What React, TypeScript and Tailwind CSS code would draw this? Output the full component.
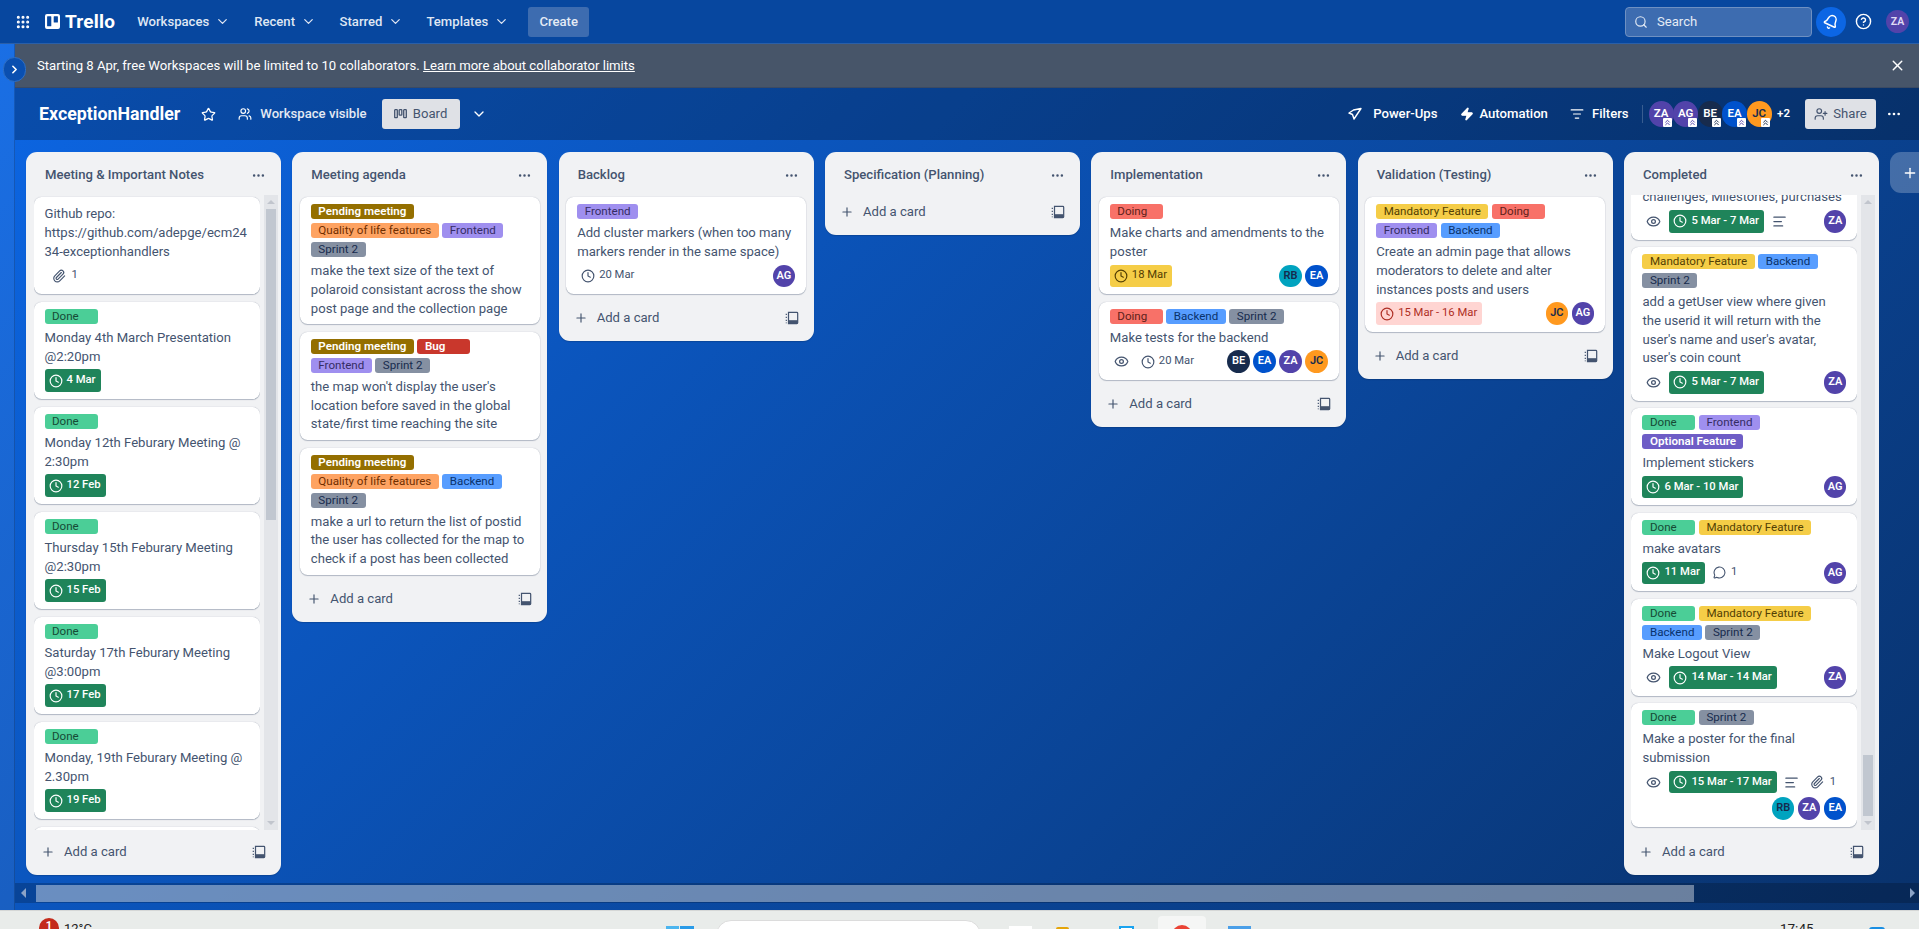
import {
  AlignLeft,
  Bell,
  ChevronDown,
  ChevronRight,
  ChevronsUp,
  CircleHelp,
  Clock,
  Ellipsis,
  Eye,
  Grip,
  ListFilter,
  MessageCircle,
  Paperclip,
  Plus,
  Search,
  Star,
  UserPlus,
  Users,
  X,
  Zap,
} from "lucide-react";

type LabelKey = keyof typeof LABELS;
type DateKind = "done" | "soon" | "late" | "plain";
type Card = {
  labels?: LabelKey[];
  title: string;
  watch?: boolean;
  date?: string;
  dateKind?: DateKind;
  desc?: boolean;
  attach?: number;
  comment?: number;
  members?: string[];
  className?: string;
};
type List = { name: string; cards: Card[]; scroll?: "top" | "bottom" };

const LABELS = {
  done: { text: "Done", cls: "bg-[#4bce97] text-[#164b35]" },
  pending: { text: "Pending meeting", cls: "bg-[#946f00] text-white font-semibold" },
  quality: { text: "Quality of life features", cls: "bg-[#fea362] text-[#702e00]" },
  frontend: { text: "Frontend", cls: "bg-[#9f8fef] text-[#352c63]" },
  sprint: { text: "Sprint 2", cls: "bg-[#8590a2] text-[#172b4d]" },
  bug: { text: "Bug", cls: "bg-[#c9372c] text-white font-semibold" },
  backend: { text: "Backend", cls: "bg-[#579dff] text-[#09326c]" },
  doing: { text: "Doing", cls: "bg-[#f87168] text-[#5d1f1a]" },
  mandatory: { text: "Mandatory Feature", cls: "bg-[#f5cd47] text-[#533f04]" },
  optional: { text: "Optional Feature", cls: "bg-[#6e5dc6] text-white font-semibold" },
};

const DATE_COLOR: Record<DateKind, string> = {
  done: "bg-[#1f845a] text-white",
  soon: "bg-[#f5cd47] text-[#533f04]",
  late: "bg-[#ffd5d2] text-[#ae2e24]",
  plain: "text-[#44546f]",
};

const MEMBER_COLOR: Record<string, string> = {
  ZA: "bg-[#5243aa] text-white",
  AG: "bg-[#5243aa] text-white",
  BE: "bg-[#172b4d] text-white",
  EA: "bg-[#0052cc] text-white",
  JC: "bg-[#ff991f] text-[#172b4d]",
  RB: "bg-[#00a3bf] text-[#172b4d]",
};

const meeting = (title: string, date: string): Card => ({ labels: ["done"], title, date, dateKind: "done" });

const LISTS: List[] = [
  {
    name: "Meeting & Important Notes",
    scroll: "top",
    cards: [
      { title: "Github repo: https://github.com/adepge/ecm2434-exceptionhandlers", attach: 1 },
      meeting("Monday 4th March Presentation @2:20pm", "4 Mar"),
      meeting("Monday 12th Feburary Meeting @ 2:30pm", "12 Feb"),
      meeting("Thursday 15th Feburary Meeting @2:30pm", "15 Feb"),
      meeting("Saturday 17th Feburary Meeting @3:00pm", "17 Feb"),
      meeting("Monday, 19th Feburary Meeting @ 2.30pm", "19 Feb"),
      // only the top edge of this one shows above the footer
      { title: "" },
    ],
  },
  {
    name: "Meeting agenda",
    cards: [
      {
        labels: ["pending", "quality", "frontend", "sprint"],
        title: "make the text size of the text of polaroid consistant across the show post page and the collection page",
      },
      {
        labels: ["pending", "bug", "frontend", "sprint"],
        title: "the map won't display the user's location before saved in the global state/first time reaching the site",
      },
      {
        labels: ["pending", "quality", "backend", "sprint"],
        title: "make a url to return the list of postid the user has collected for the map to check if a post has been collected",
      },
    ],
  },
  {
    name: "Backlog",
    cards: [
      {
        labels: ["frontend"],
        title: "Add cluster markers (when too many markers render in the same space)",
        date: "20 Mar",
        dateKind: "plain",
        members: ["AG"],
      },
    ],
  },
  { name: "Specification (Planning)", cards: [] },
  {
    name: "Implementation",
    cards: [
      {
        labels: ["doing"],
        title: "Make charts and amendments to the poster",
        date: "18 Mar",
        dateKind: "soon",
        members: ["RB", "EA"],
      },
      {
        labels: ["doing", "backend", "sprint"],
        title: "Make tests for the backend",
        watch: true,
        date: "20 Mar",
        dateKind: "plain",
        members: ["BE", "EA", "ZA", "JC"],
      },
    ],
  },
  {
    name: "Validation (Testing)",
    cards: [
      {
        labels: ["mandatory", "doing", "frontend", "backend"],
        title: "Create an admin page that allows moderators to delete and alter instances posts and users",
        date: "15 Mar - 16 Mar",
        dateKind: "late",
        members: ["JC", "AG"],
      },
    ],
  },
  {
    name: "Completed",
    scroll: "bottom",
    cards: [
      {
        title: "challenges, Milestones, purchases",
        watch: true,
        date: "5 Mar - 7 Mar",
        dateKind: "done",
        desc: true,
        members: ["ZA"],
        className: "-mt-[16.75px]",
      },
      {
        labels: ["mandatory", "backend", "sprint"],
        title: "add a getUser view where given the userid it will return with the user's name and user's avatar, user's coin count",
        watch: true,
        date: "5 Mar - 7 Mar",
        dateKind: "done",
        members: ["ZA"],
      },
      {
        labels: ["done", "frontend", "optional"],
        title: "Implement stickers",
        date: "6 Mar - 10 Mar",
        dateKind: "done",
        members: ["AG"],
      },
      {
        labels: ["done", "mandatory"],
        title: "make avatars",
        date: "11 Mar",
        dateKind: "done",
        comment: 1,
        members: ["AG"],
      },
      {
        labels: ["done", "mandatory", "backend", "sprint"],
        title: "Make Logout View",
        watch: true,
        date: "14 Mar - 14 Mar",
        dateKind: "done",
        members: ["ZA"],
      },
      {
        labels: ["done", "sprint"],
        title: "Make a poster for the final submission",
        watch: true,
        date: "15 Mar - 17 Mar",
        dateKind: "done",
        desc: true,
        attach: 1,
        members: ["RB", "ZA", "EA"],
      },
    ],
  },
];

function TemplateIcon() {
  return (
    <svg width="14" height="14" viewBox="0 0 16 16" fill="none" stroke="currentColor" strokeWidth="1.4">
      <path d="M4 1.500h9.500a1 1 0 0 1 1 1v11a1 1 0 0 1-1 1H4z" />
      <path d="M1.500 3v1.500M1.500 6.500v1.500M1.500 10v1.500M1.500 13v1" />
      <path d="M4.500 10.500h10v3.700h-10z" fill="currentColor" stroke="none" />
    </svg>
  );
}

function TrelloLogo() {
  return (
    <div className="flex items-center gap-[5px] text-white">
      <svg width="15" height="15" viewBox="0 0 15 15">
        <path
          fillRule="evenodd"
          fill="currentColor"
          d="M2 0h11a2 2 0 0 1 2 2v11a2 2 0 0 1-2 2H2a2 2 0 0 1-2-2V2a2 2 0 0 1 2-2zm.6 2.200a.5.5 0 0 0-.5.5v9a.5.5 0 0 0 .5.5h3.200a.5.5 0 0 0 .5-.5v-9a.5.5 0 0 0-.5-.5zm6.600 0a.5.5 0 0 0-.5.5v5.200a.5.5 0 0 0 .5.5h3.200a.5.5 0 0 0 .5-.5V2.700a.5.5 0 0 0-.5-.5z"
        />
      </svg>
      <span className="text-[19px] font-bold leading-none tracking-[0.2px]">Trello</span>
    </div>
  );
}

function NavMenu({ label, className }: { label: string; className: string }) {
  return (
    <div className={`flex items-center text-[13.125px] font-medium text-[#dfe6f3] ${className}`}>
      {label}
      <ChevronDown size={15} strokeWidth={2} className="ml-[6px]" />
    </div>
  );
}

function Avatar({ who, size = "card" }: { who: string; size?: "card" | "nav" }) {
  return (
    <span
      className={`flex shrink-0 items-center justify-center rounded-full font-semibold ${MEMBER_COLOR[who]} ${
        size === "card" ? "h-[22.5px] w-[22.500px] text-[11px]" : "h-[26px] w-[25px] text-[11.5px]"
      }`}
    >
      {who}
    </span>
  );
}

function BoardMember({ who, dark }: { who: string; dark?: boolean }) {
  return (
    <div className="relative -mr-px w-[25.5px] shrink-0">
      <Avatar who={who} size="nav" />
      <span
        className={`absolute right-[2px] bottom-0 flex h-[9px] w-[9px] items-center justify-center rounded-[1px] bg-white ${
          dark ? "text-[#172b4d]" : "text-[#5243aa]"
        }`}
      >
        <ChevronsUp size={9} strokeWidth={2.5} />
      </span>
    </div>
  );
}

function CardView({ card }: { card: Card }) {
  const hasMeta = card.watch || card.date || card.attach || card.comment || card.members;
  return (
    <div
      className={`shrink-0 rounded-[7.5px] bg-white px-[11px] pt-[7px] pb-[7px] shadow-[0_1px_1px_#091e4240,0_0_1px_#091e424f] ${card.className ?? ""}`}
    >
      {card.labels && (
        <div className="mb-[4px] flex flex-wrap gap-x-[3.5px] gap-y-[4px]">
          {card.labels.map((l) => (
            <span
              key={l}
              className={`inline-block h-[15px] min-w-[53px] rounded-[3px] px-[7.5px] text-[11.6px] leading-[15px] ${LABELS[l].cls}`}
            >
              {LABELS[l].text}
            </span>
          ))}
        </div>
      )}
      <p className="min-h-[18.75px] translate-y-[1px] text-[13.125px] leading-[18.75px] text-[#44546f] [overflow-wrap:anywhere]">
        {card.title}
      </p>
      {hasMeta && (
        <div className="mt-[4px] flex flex-wrap items-center gap-y-[4px] text-[11.25px] text-[#44546f]">
          {card.watch && (
            <span className="mr-[4px] flex h-[22.5px] w-[23px] items-center justify-center">
              <Eye size={15} />
            </span>
          )}
          {card.date && (
            <span
              className={`flex h-[22.5px] items-center gap-[4px] rounded-[3px] pr-[5px] pl-[4px] ${DATE_COLOR[card.dateKind ?? "plain"]} ${
                card.dateKind === "done" ? "font-medium" : ""
              }`}
            >
              <Clock size={14} />
              {card.date}
            </span>
          )}
          {card.desc && (
            <span className="ml-[4px] flex h-[22.5px] w-[22px] items-center justify-center">
              <AlignLeft size={15} />
            </span>
          )}
          {card.comment && (
            <span className="ml-[5px] flex h-[22.5px] items-center gap-[5px] px-[3px]">
              <MessageCircle size={13} />
              {card.comment}
            </span>
          )}
          {card.attach && (
            <span className="ml-[4px] flex h-[22.5px] items-center gap-[6px] px-[3px]">
              <Paperclip size={14} />
              {card.attach}
            </span>
          )}
          {card.members && (
            <div className="ml-auto flex gap-[3.5px]">
              {card.members.map((m) => (
                <Avatar key={m} who={m} />
              ))}
            </div>
          )}
        </div>
      )}
    </div>
  );
}

function Scrollbar({ at }: { at: "top" | "bottom" }) {
  return (
    <div className="relative flex h-full w-[14px] shrink-0 flex-col items-center bg-[#e3e5e9]">
      <span className="mt-[5px] h-0 w-0 border-x-[4px] border-b-[4px] border-x-transparent border-b-[#c1c5cd]" />
      {at === "top" ? (
        <div className="mt-[5px] h-[311px] w-[10px] bg-[#c1c7d0]" />
      ) : (
        <div className="mt-auto mb-[5px] h-[61px] w-[10px] bg-[#c1c7d0]" />
      )}
      <span
        className={`mb-[5px] h-0 w-0 border-x-[4px] border-t-[4px] border-x-transparent border-t-[#c1c5cd] ${
          at === "top" ? "mt-auto" : ""
        }`}
      />
    </div>
  );
}

function ListColumn({ list }: { list: List }) {
  return (
    <div
      className={`flex w-[255px] shrink-0 flex-col rounded-[11px] bg-[#f1f2f4] shadow-[0_1px_1px_#091e4240] ${
        list.scroll ? "h-[723px]" : "self-start"
      }`}
    >
      <div className="flex h-[42px] shrink-0 items-center justify-between pr-[15px] pl-[19px] pt-[4px] text-[#44546f]">
        <h2 className="text-[13.125px] font-medium">{list.name}</h2>
        <Ellipsis size={15} />
      </div>
      {list.scroll ? (
        <div className="mt-[1px] flex h-[635px] min-h-0 shrink-0 gap-[4px] pl-[7.5px]">
          <div
            className={`flex w-[226px] flex-col overflow-hidden pt-[2px] pb-[2px] ${
              list.scroll === "top" ? "gap-[8px]" : "gap-[7.5px]"
            }`}
          >
            {list.cards.map((c, i) => (
              <CardView key={i} card={c} />
            ))}
          </div>
          <Scrollbar at={list.scroll} />
        </div>
      ) : (
        list.cards.length > 0 && (
          <div className="flex flex-col gap-[7.5px] px-[7.5px] pt-[3px] pb-[6px]">
            {list.cards.map((c) => (
              <CardView key={c.title} card={c} />
            ))}
          </div>
        )
      )}
      <div
        className={`flex shrink-0 items-start justify-between pr-[15px] pl-[15px] text-[#44546f] ${
          list.scroll ? "h-[45px] pt-[13px]" : "h-[41px] pt-[9px]"
        }`}
      >
        <div className="flex h-[18px] items-center gap-[9px] text-[13.125px]">
          <Plus size={14} />
          Add a card
        </div>
        <span className="mt-[2px]">
          <TemplateIcon />
        </span>
      </div>
    </div>
  );
}

function TopNav() {
  return (
    <nav className="flex h-[44px] shrink-0 items-center border-b border-[#2a5fa8] bg-[#07479f] text-white">
      <Grip size={16} strokeWidth={2.6} className="ml-[15px]" />
      <div className="ml-[14px]">
        <TrelloLogo />
      </div>
      <NavMenu label="Workspaces" className="ml-[22px]" />
      <NavMenu label="Recent" className="ml-[24px]" />
      <NavMenu label="Starred" className="ml-[23.5px]" />
      <NavMenu label="Templates" className="ml-[23px]" />
      <button className="ml-[19px] h-[30px] w-[61px] rounded-[3px] bg-[#3d6cb0] text-[13.125px] font-medium text-[#e4ebf5]">
        Create
      </button>
      <div className="ml-auto flex h-[30px] w-[187px] items-center gap-[9px] rounded-[4px] border border-[#6e90c2] bg-[#3d6cb0] pl-[8px] text-[13.125px] text-[#e4ebf5]">
        <Search size={14} />
        Search
      </div>
      <span className="ml-[4px] flex h-[30px] w-[30px] items-center justify-center rounded-full bg-[#0c66e4]">
        <Bell size={16} strokeWidth={2.2} className="rotate-[25deg]" />
      </span>
      <CircleHelp size={17} className="ml-[9px]" />
      <span className="mr-[10px] ml-[14px] flex h-[23px] w-[23px] items-center justify-center rounded-full bg-[#5243aa] text-[10.5px] font-semibold text-[#e0dcf5]">
        ZA
      </span>
    </nav>
  );
}

function BoardHeader() {
  return (
    <header className="flex h-[52px] shrink-0 items-center bg-[#0000003d] text-white">
      <h1 className="ml-[24px] text-[17.8px] font-bold">ExceptionHandler</h1>
      <Star size={15} className="ml-[21px]" />
      <Users size={14} className="ml-[22px]" />
      <span className="ml-[8px] text-[13.125px] font-medium text-[#e3e9f3]">Workspace visible</span>
      <button className="ml-[15px] flex h-[30px] w-[78px] items-center justify-center gap-[6px] rounded-[3px] bg-[#dfe1e6] text-[13.125px] text-[#44546f]">
        <svg width="13" height="10" viewBox="0 0 13 10" fill="none" stroke="currentColor" strokeWidth="1.3">
          <rect x="0.700" y="0.700" width="2.600" height="8" rx="0.500" />
          <rect x="5.200" y="0.700" width="2.600" height="5.500" rx="0.500" />
          <rect x="9.700" y="0.700" width="2.600" height="8" rx="0.500" />
        </svg>
        Board
      </button>
      <ChevronDown size={16} className="ml-[11px]" />
      <div className="ml-auto flex items-center">
        <svg width="14" height="14" viewBox="0 0 14 14" fill="none" stroke="currentColor" strokeWidth="1.4" strokeLinejoin="round">
          <path d="M13 1.500 5.500 3 1 6l3.500 1.500L6 12l3-4.500z" />
        </svg>
        <span className="ml-[11px] text-[13.125px] font-medium">Power-Ups</span>
        <Zap size={14} fill="currentColor" className="ml-[23px]" />
        <span className="ml-[5px] text-[13.125px] font-medium">Automation</span>
        <ListFilter size={14} className="ml-[22px]" />
        <span className="ml-[8px] text-[13.125px] font-medium">Filters</span>
        <span className="ml-[13px] h-[18px] w-px bg-[#ffffff33]" />
        <div className="ml-[6px] flex">
          <BoardMember who="ZA" />
          <BoardMember who="AG" />
          <BoardMember who="BE" dark />
          <BoardMember who="EA" />
          <BoardMember who="JC" dark />
        </div>
        <span className="ml-[6px] text-[11.5px] font-semibold">+2</span>
        <button className="ml-[15px] flex h-[30px] w-[71px] items-center justify-center gap-[5px] rounded-[3px] bg-[#dfe1e6] text-[13.125px] text-[#44546f]">
          <UserPlus size={14} />
          Share
        </button>
        <Ellipsis size={16} className="mr-[17px] ml-[10px]" />
      </div>
    </header>
  );
}

function Taskbar() {
  return (
    <footer className="flex h-[19px] shrink-0 items-start overflow-hidden border-t border-[#d5d7d6] bg-[#e9ecea] text-[13px] text-[#222]">
      <span className="mt-[7px] ml-[39px] flex h-[20px] w-[20px] shrink-0 items-start justify-center rounded-full bg-[#c42b1c] text-[11px] font-bold text-white">
        1
      </span>
      <span className="mt-[11px] ml-[5px] leading-none">12°C</span>
      <div className="mt-[15px] ml-[574px] grid h-[28px] w-[28px] shrink-0 grid-cols-2 gap-[1px]">
        <span className="bg-[#4cb5ef]" />
        <span className="bg-[#2a9be8]" />
      </div>
      <span className="mt-[9px] ml-[22px] h-[30px] w-[265px] shrink-0 rounded-full border border-[#dcdcdc] bg-white" />
      <span className="mt-[15px] ml-[28px] h-[20px] w-[23px] shrink-0 bg-white" />
      <span className="mt-[16px] ml-[24px] h-[20px] w-[13px] shrink-0 rounded-t-[2px] bg-[#e5a50a]" />
      <span className="mt-[15px] ml-[50px] h-[20px] w-[15px] shrink-0 border-[2px] border-[#1aa3ef] bg-white" />
      <div className="mt-[5px] ml-[24px] flex h-[30px] w-[48px] shrink-0 justify-center rounded-t-[4px] bg-[#f5f6f5]">
        <span className="mt-[9px] h-[20px] w-[20px] rounded-full bg-[#ea4335]" />
      </div>
      <span className="mt-[15px] ml-[22px] h-[20px] w-[23px] shrink-0 bg-[#4a9fe8]" />
      <span className="mt-[11px] ml-[529px] text-[13.5px] leading-none">17:45</span>
      <span className="mt-[16px] ml-[55px] h-[20px] w-[16px] shrink-0 rounded-t-[3px] bg-[#1a8fe3]" />
    </footer>
  );
}

export default function App() {
  return (
    <div className="flex h-screen w-full flex-col overflow-hidden font-['Roboto',sans-serif]">
      <TopNav />
      <div className="relative flex min-h-0 flex-1 bg-[linear-gradient(135deg,#0c66e4,#09326c)]">
        <div className="w-[15px] shrink-0 border-r border-[#00000030] bg-[#ffffff0f]" />
        <button className="absolute top-[13px] left-[3px] z-10 flex h-[25px] w-[23px] items-center justify-center rounded-full border border-[#2f6fc4] bg-[#0a4fb0] text-white">
          <ChevronRight size={13} strokeWidth={3} />
        </button>
        <main className="flex min-w-0 flex-1 flex-col">
          <div className="flex h-[44px] shrink-0 items-center justify-between border-b border-[#3b4a63] bg-[#475569] pr-[13px] pl-[22px] text-white">
            <p className="text-[13.125px]">
              Starting 8 Apr, free Workspaces will be limited to 10 collaborators.{" "}
              <span className="underline">Learn more about collaborator limits</span>
            </p>
            <X size={17} />
          </div>
          <BoardHeader />
          <div className="flex h-[743px] shrink-0 items-start gap-[11.33px] overflow-hidden pt-[12px] pl-[11px]">
            {LISTS.map((l) => (
              <ListColumn key={l.name} list={l} />
            ))}
            <div className="flex h-[41px] w-[40px] shrink-0 items-center rounded-l-[11px] bg-[#ffffff3d] pl-[12px] text-white">
              <Plus size={16} />
            </div>
          </div>
          <div className="flex h-[20px] shrink-0 items-center bg-[#00000033]">
            <span className="ml-[6px] h-0 w-0 border-y-[5px] border-r-[5px] border-y-transparent border-r-[#8ba3c7]" />
            <div className="ml-[10px] h-[17px] w-[1658px] bg-[#ffffff66]" />
            <span className="mr-[4px] ml-auto h-0 w-0 border-y-[5px] border-l-[5px] border-y-transparent border-l-[#8ba3c7]" />
          </div>
          <div className="flex-1" />
        </main>
      </div>
      <Taskbar />
    </div>
  );
}
